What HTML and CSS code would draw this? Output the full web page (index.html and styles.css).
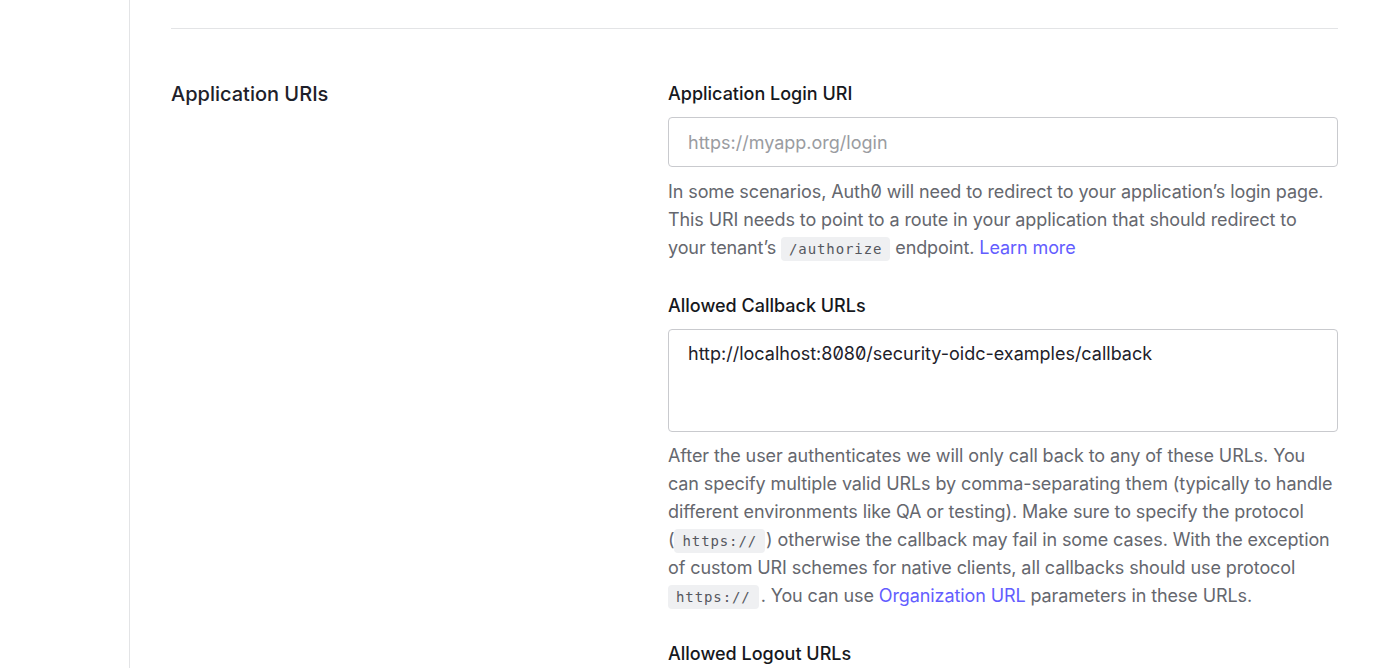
FILE: index.html
```html
<!DOCTYPE html>
<html>
<head>
<meta charset="utf-8">
<link rel="stylesheet" href="styles.css">
</head>
<body>
<div class="layout">
  <aside class="sidebar"></aside>
  <main class="main">
    <hr class="divider">
    <section class="section">
      <h2 class="section-title">Application URIs</h2>
      <div class="fields">
        <div class="field">
          <label class="label">Application Login URI</label>
          <input class="input" type="text" placeholder="https://myapp.org/login">
          <p class="help help-first">In some scenarios, Auth0 will need to redirect to your application’s login page. This URI needs to point to a route in your application that should redirect to your tenant’s <code class="code">/authorize</code> endpoint. <a class="link" href="#">Learn more</a></p>
        </div>
        <div class="field">
          <label class="label">Allowed Callback URLs</label>
          <div class="textarea">http://localhost:8080/security-oidc-examples/callback</div>
          <p class="help">After the user authenticates we will only call back to any of these URLs. You can specify multiple valid URLs by comma-separating them (typically to handle different environments like QA or testing). Make sure to specify the protocol <span class="nowrap">(<code class="code code-paren">https://</code>)</span> otherwise the callback may fail in some cases. With the exception of custom URI schemes for native clients, all callbacks should use protocol <code class="code code-end">https://</code>. You can use <a class="link" href="#">Organization URL</a> parameters in these URLs.</p>
        </div>
        <div class="field">
          <label class="label">Allowed Logout URLs</label>
        </div>
      </div>
    </section>
  </main>
</div>
</body>
</html>
```
FILE: styles.css
```css
html, body {
  margin: 0;
  padding: 0;
  background: #fff;
}
body {
  font-family: Inter, "Noto Sans", sans-serif;
  font-feature-settings: "zero" 1;
  color: #1e212a;
  overflow: hidden;
  height: 668px;
}
.layout {
  display: flex;
  min-height: 668px;
}
.sidebar {
  width: 129px;
  flex: 0 0 129px;
  border-right: 1px solid #e3e4e6;
}
.main {
  flex: 1;
  padding: 0 35px 0 41px;
}
.divider {
  margin: 28px 0 0;
  border: 0;
  border-top: 1px solid #e3e4e6;
  height: 0;
}
.section {
  display: grid;
  grid-template-columns: 497px 670px;
  padding-top: 51px;
}
.section-title {
  margin: 0;
  font-size: 20px;
  line-height: 28px;
  font-weight: 500;
  color: #1e212a;
}
.fields {
  display: flex;
  flex-direction: column;
  gap: 30px;
}
.field {
  display: flex;
  flex-direction: column;
}
.label {
  font-size: 18px;
  line-height: 28px;
  font-weight: 500;
  color: #161820;
  margin-bottom: 9px;
}
.input {
  box-sizing: border-box;
  height: 50px;
  width: 100%;
  border: 1px solid #c9cace;
  border-radius: 4px;
  padding: 0 19px;
  font-family: inherit;
  font-size: 18px;
  color: #1e212a;
  outline: none;
  margin: 0;
}
.input::placeholder {
  color: #9a9ca1;
}
.textarea {
  box-sizing: border-box;
  height: 103px;
  border: 1px solid #c9cace;
  border-radius: 4px;
  padding: 12px 19px;
  font-size: 18px;
  line-height: 24px;
  color: #1e212a;
}
.help {
  margin: 10px 0 0;
  font-size: 18px;
  line-height: 28px;
  letter-spacing: -0.1px;
  color: #65676e;
}
.help-first {
  margin-top: 11px;
}
.nowrap {
  white-space: nowrap;
}
.code {
  font-family: "DejaVu Sans Mono", monospace;
  font-size: 14px;
  line-height: 1;
  letter-spacing: 0.9px;
  background: #eff0f2;
  color: #55575e;
  border-radius: 4px;
  padding: 4px 8px;
}
.code-paren {
  margin: 0 1px 0 0;
}
.code-end {
  margin-right: 2px;
}
.link {
  color: #635dff;
  text-decoration: none;
}
```
